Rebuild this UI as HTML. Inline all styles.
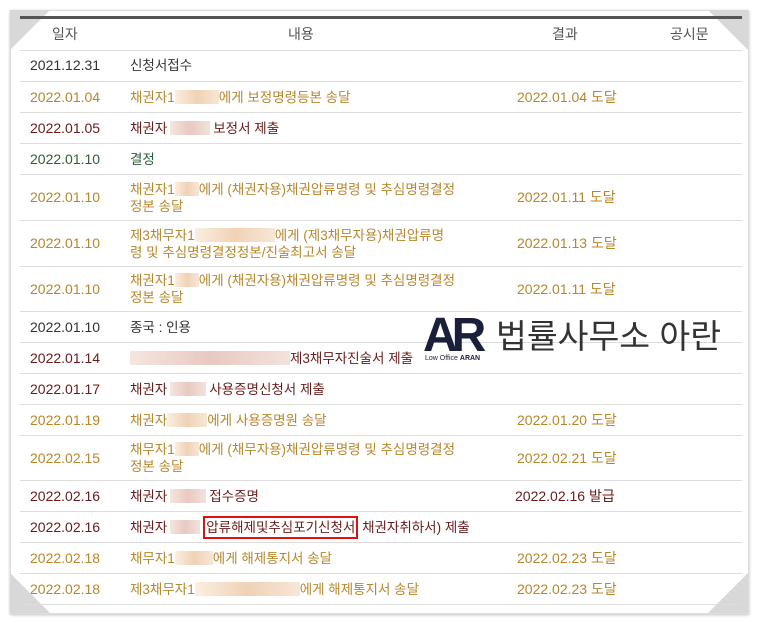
<!DOCTYPE html>
<html><head><meta charset="utf-8"><style>
body{margin:0;width:759px;height:623px;background:#fff;font-family:"Liberation Sans","Noto Sans CJK KR",sans-serif;font-size:13.5px;position:relative;overflow:hidden}
.frame{position:absolute;left:10px;top:10px;width:737px;height:602px;border:1px solid #ddd;box-shadow:0 1px 3px rgba(0,0,0,.25);background:#fff}
.tl{position:absolute;left:10px;top:10px;width:0;height:0;border-top:40px solid #d8d8d8;border-right:40px solid transparent}
.tr{position:absolute;right:11px;top:10px;border-top:40px solid #d8d8d8;border-left:40px solid transparent}
.bl{position:absolute;left:10px;bottom:10px;border-bottom:40px solid #d8d8d8;border-right:40px solid transparent}
.br{position:absolute;right:11px;bottom:10px;border-bottom:40px solid #d8d8d8;border-left:40px solid transparent}
.topline{position:absolute;left:20px;top:16px;width:722px;height:3px;background:#555}
.row{position:absolute;left:20px;width:722px;border-bottom:1px solid #ddd;display:flex;align-items:center;line-height:17px}
.d{position:absolute;left:10px;font-size:14px}
.c{position:absolute;left:110px}
.r{position:absolute;left:497px;font-size:14px}
.h{color:#555;font-size:14px}
.k{color:#333}.o{color:#b8862b}.m{color:#6b1a1a}.g{color:#2e5e3a}
.b{display:inline-block;width:44px;height:14px;vertical-align:-2px;background:linear-gradient(90deg,#f5e6e0,#e8c9c0,#f3e2dc)}
.bo{background:linear-gradient(90deg,#fbeee2,#f0d2b6,#f8e6d6)}
</style></head><body>
<div class="frame"></div>
<div class="tl"></div><div class="tr"></div><div class="bl"></div><div class="br"></div>
<div class="topline"></div>
<div class="row h" style="top:19px;height:31px"><span style="position:absolute;left:32px">일자</span><span style="position:absolute;left:268px">내용</span><span style="position:absolute;left:532px">결과</span><span style="position:absolute;left:650px">공시문</span></div>
<div class="row k" style="top:50px;height:31px"><span class="d">2021.12.31</span><span class="c">신청서접수</span></div>
<div class="row o" style="top:82px;height:30px"><span class="d">2022.01.04</span><span class="c">채권자1<span class="b bo" style="width:44px"></span>에게 보정명령등본 송달</span><span class="r">2022.01.04 도달</span></div>
<div class="row m" style="top:113px;height:30px"><span class="d">2022.01.05</span><span class="c">채권자<span class="b" style="width:40px;margin:0 3px"></span>보정서 제출</span></div>
<div class="row g" style="top:144px;height:30px"><span class="d">2022.01.10</span><span class="c">결정</span></div>
<div class="row o" style="top:175px;height:45px"><span class="d">2022.01.10</span><span class="c">채권자1<span class="b bo" style="width:24px"></span>에게 (채권자용)채권압류명령 및 추심명령결정<br>정본 송달</span><span class="r">2022.01.11 도달</span></div>
<div class="row o" style="top:221px;height:45px"><span class="d">2022.01.10</span><span class="c">제3채무자1<span class="b bo" style="width:80px"></span>에게 (제3채무자용)채권압류명<br>령 및 추심명령결정정본/진술최고서 송달</span><span class="r">2022.01.13 도달</span></div>
<div class="row o" style="top:267px;height:44px"><span class="d">2022.01.10</span><span class="c">채권자1<span class="b bo" style="width:24px"></span>에게 (채권자용)채권압류명령 및 추심명령결정<br>정본 송달</span><span class="r">2022.01.11 도달</span></div>
<div class="row k" style="top:312px;height:30px"><span class="d">2022.01.10</span><span class="c">종국 : 인용</span></div>
<div class="row m" style="top:343px;height:30px"><span class="d">2022.01.14</span><span class="c"><span class="b" style="width:160px"></span>제3채무자진술서 제출</span></div>
<div class="row m" style="top:374px;height:30px"><span class="d">2022.01.17</span><span class="c">채권자<span class="b" style="width:36px;margin:0 3px"></span>사용증명신청서 제출</span></div>
<div class="row o" style="top:405px;height:30px"><span class="d">2022.01.19</span><span class="c">채권자<span class="b bo" style="width:40px"></span>에게 사용증명원 송달</span><span class="r">2022.01.20 도달</span></div>
<div class="row o" style="top:436px;height:44px"><span class="d">2022.02.15</span><span class="c">채무자1<span class="b bo" style="width:24px"></span>에게 (채무자용)채권압류명령 및 추심명령결정<br>정본 송달</span><span class="r">2022.02.21 도달</span></div>
<div class="row m" style="top:481px;height:30px"><span class="d">2022.02.16</span><span class="c">채권자<span class="b" style="width:36px;margin:0 3px"></span>접수증명</span><span class="r" style="left:495px">2022.02.16 발급</span></div>
<div class="row m" style="top:512px;height:30px"><span class="d">2022.02.16</span><span class="c">채권자<span class="b" style="width:30px;margin:0 3px"></span><span style="border:2px solid #e01010;padding:2px 1px">압류해제및추심포기신청서</span> 채권자취하서) 제출</span></div>
<div class="row o" style="top:543px;height:30px"><span class="d">2022.02.18</span><span class="c">채무자1<span class="b bo" style="width:38px"></span>에게 해제통지서 송달</span><span class="r">2022.02.23 도달</span></div>
<div class="row o" style="top:574px;height:30px"><span class="d">2022.02.18</span><span class="c">제3채무자1<span class="b bo" style="width:105px"></span>에게 해제통지서 송달</span><span class="r">2022.02.23 도달</span></div>
<div style="position:absolute;left:423px;top:318px;width:310px;height:46px">
<div style="position:absolute;left:0;top:-6px;font:bold 48px 'Liberation Sans',sans-serif;color:#1a1f3a;letter-spacing:-6px;line-height:48px">AR</div>
<div style="position:absolute;left:2px;top:37px;font-size:7px;color:#1a1f3a;white-space:nowrap">Low Office <b>ARAN</b></div>
<div style="position:absolute;left:73px;top:1px;font-size:33.5px;color:#333;line-height:38px;white-space:nowrap">법률사무소 아란</div>
</div>
</body></html>
